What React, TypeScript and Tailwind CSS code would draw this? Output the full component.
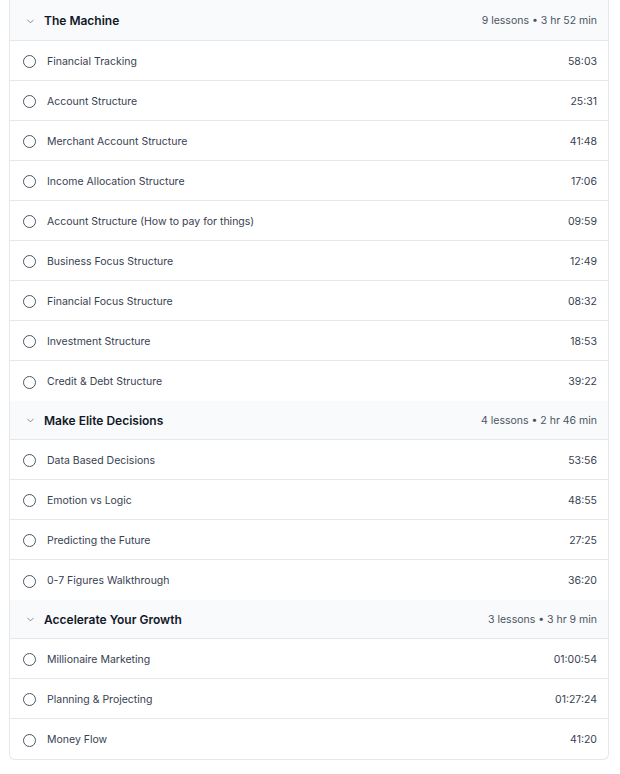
import { ChevronDown } from "lucide-react";

const sections = [
  {
    title: "The Machine",
    meta: "9 lessons • 3 hr 52 min",
    lessons: [
      ["Financial Tracking", "58:03"],
      ["Account Structure", "25:31"],
      ["Merchant Account Structure", "41:48"],
      ["Income Allocation Structure", "17:06"],
      ["Account Structure (How to pay for things)", "09:59"],
      ["Business Focus Structure", "12:49"],
      ["Financial Focus Structure", "08:32"],
      ["Investment Structure", "18:53"],
      ["Credit & Debt Structure", "39:22"],
    ],
  },
  {
    title: "Make Elite Decisions",
    meta: "4 lessons • 2 hr 46 min",
    lessons: [
      ["Data Based Decisions", "53:56"],
      ["Emotion vs Logic", "48:55"],
      ["Predicting the Future", "27:25"],
      ["0-7 Figures Walkthrough", "36:20"],
    ],
  },
  {
    title: "Accelerate Your Growth",
    meta: "3 lessons • 3 hr 9 min",
    lessons: [
      ["Millionaire Marketing", "01:00:54"],
      ["Planning & Projecting", "01:27:24"],
      ["Money Flow", "41:20"],
    ],
  },
];

export default function App() {
  return (
    <div className="min-h-screen bg-white" style={{ fontFamily: "Inter, 'Liberation Sans', sans-serif" }}>
      <div className="ml-[9px] w-[600px] border-x border-b border-[#e5e7eb] rounded-b-md overflow-hidden">
        {sections.map((section, si) => (
          <div key={section.title}>
            {/* Section header */}
            <div
              className={`flex items-center justify-between bg-[#f9fafb] border-b border-[#e5e7eb] pl-[15px] pr-[11px] ${
                si === 0 ? "h-[41px] pt-[2px]" : "h-[39px] pt-[1px]"
              }`}
            >
              <div className="flex items-center gap-[8px]">
                <ChevronDown className="w-[11px] h-[11px] text-[#6b7280]" strokeWidth={1.75} />
                <span className="text-[12px] font-semibold text-[#111827]">{section.title}</span>
              </div>
              <span className="text-[10.5px] text-[#4b5563]">{section.meta}</span>
            </div>
            {section.lessons.map(([name, time], li) => (
              <div
                key={name}
                className={`h-10 pt-[2px] flex items-center justify-between pl-[13px] pr-[11px] ${
                  li < section.lessons.length - 1 ? "border-b border-[#e5e7eb]" : ""
                }`}
              >
                <div className="flex items-center gap-[11px]">
                  <span className="w-[13px] h-[13px] rounded-full border-[1.5px] border-[#4b5563]" />
                  <span className="text-[10.5px] text-[#374151]">{name}</span>
                </div>
                <span className="text-[10.5px] text-[#374151]">{time}</span>
              </div>
            ))}
          </div>
        ))}
      </div>
    </div>
  );
}
